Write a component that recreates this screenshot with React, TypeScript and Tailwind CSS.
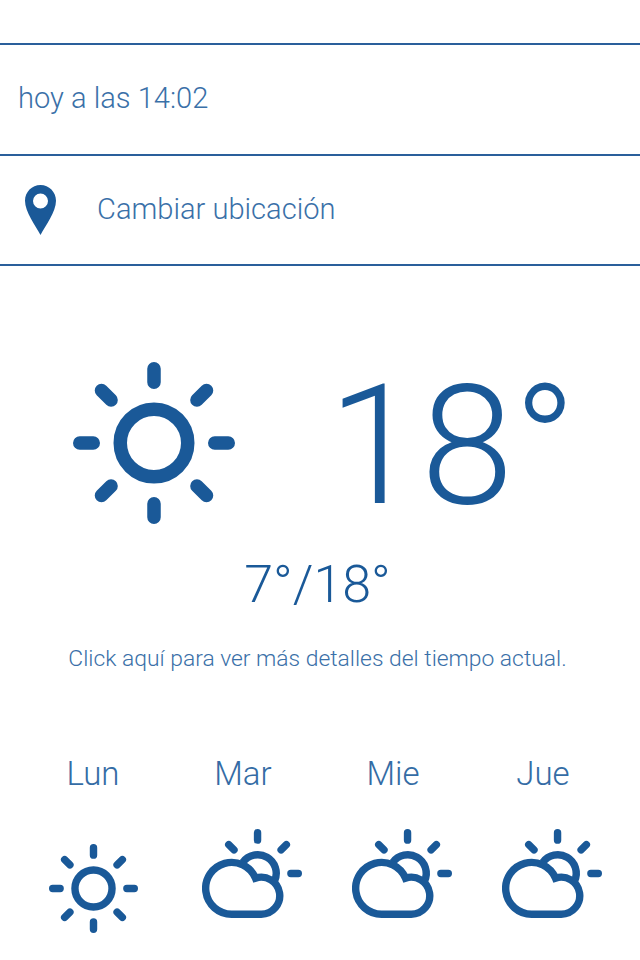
const forecast = [
  { day: "Lun", icon: "sun" },
  { day: "Mar", icon: "cloud" },
  { day: "Mie", icon: "cloud" },
  { day: "Jue", icon: "cloud" },
];

function SunIcon({ className }: { className?: string }) {
  return (
    <svg
      viewBox="0 0 24 24"
      fill="none"
      stroke="currentColor"
      strokeWidth="2"
      strokeLinecap="round"
      className={className}
    >
      <circle cx="12" cy="12" r="5" />
      <path d="M12 1v2M12 21v2M1 12h2M21 12h2M4.22 4.22l1.42 1.42M18.36 18.36l1.42 1.42M4.22 19.78l1.42-1.42M18.36 5.64l1.42-1.42" />
    </svg>
  );
}

function CloudSunIcon({ className }: { className?: string }) {
  return (
    <svg
      viewBox="0 0 27 24"
      fill="none"
      stroke="currentColor"
      strokeWidth="2"
      className={className}
    >
      <path d="M15 1v2M24 12h2M7.22 4.22l1.42 1.42M21.36 5.64l1.42-1.42" strokeLinecap="round" />
      <path d="M11 9A5 5 0 0 1 19.6 14" />
      <path d="M16 23H8A7 7 0 1 1 14.43 13.25A5 5 0 1 1 16 23Z" />
    </svg>
  );
}

function PinIcon({ className }: { className?: string }) {
  return (
    <svg viewBox="0 0 31 50" fill="currentColor" className={className}>
      <path
        fillRule="evenodd"
        d="M15.5 0C6.9 0 0 6.9 0 15.8C0 27 10.5 40.5 15.5 50C20.5 40.5 31 27 31 15.8C31 6.9 24.1 0 15.5 0ZM15.5 8.5a7.5 7.5 0 1 1 0 15a7.5 7.5 0 1 1 0-15Z"
      />
    </svg>
  );
}

export default function App() {
  return (
    <main className="h-[960px] w-[640px] overflow-hidden bg-white pt-[43px] font-['Roboto',sans-serif] font-light text-[#1a5998]">
      <div className="flex h-[111px] items-center border-t-2 border-[#2a5f9b] pb-[2px] pl-[18px] text-[29.1px] text-[#3a70a8]">
        <p>hoy a las 14:02</p>
      </div>
      <button className="flex h-[112px] w-full items-center border-y-2 border-[#2a5f9b] pl-[25px] text-[29.1px]">
        <PinIcon className="h-[50px] w-[31px]" />
        <span className="ml-[41px] text-[#3a70a8]">Cambiar ubicación</span>
      </button>

      <section className="flex flex-col items-center pt-[77px]">
        <div className="flex h-[200px] w-full pl-[73px]">
          <SunIcon className="mt-[19px] size-[162px]" />
          <p className="mt-[3px] ml-[93px] text-[167px] leading-[200px]">18°</p>
        </div>
        <p className="mt-[12px] mr-[5px] text-[52px] leading-[60px]">7°/18°</p>
        <p className="mt-[28px] mr-[5px] text-[22.85px] leading-[32px] text-[#3a70a8]">
          Click aquí para ver más detalles del tiempo actual.
        </p>
      </section>

      <section className="mt-[79px] grid grid-cols-[150px_150px_150px_150px] pl-[18px]">
        {forecast.map(({ day, icon }) => (
          <div key={day} className="flex flex-col items-center">
            <p className="text-[33px] leading-[40px] text-[#346ca5]">{day}</p>
            {icon === "sun" ? (
              <SunIcon className="mt-[50px] size-[89px]" />
            ) : (
              <CloudSunIcon className="mt-[35px] ml-[18px] h-[89px] w-[100px]" />
            )}
          </div>
        ))}
      </section>
    </main>
  );
}
